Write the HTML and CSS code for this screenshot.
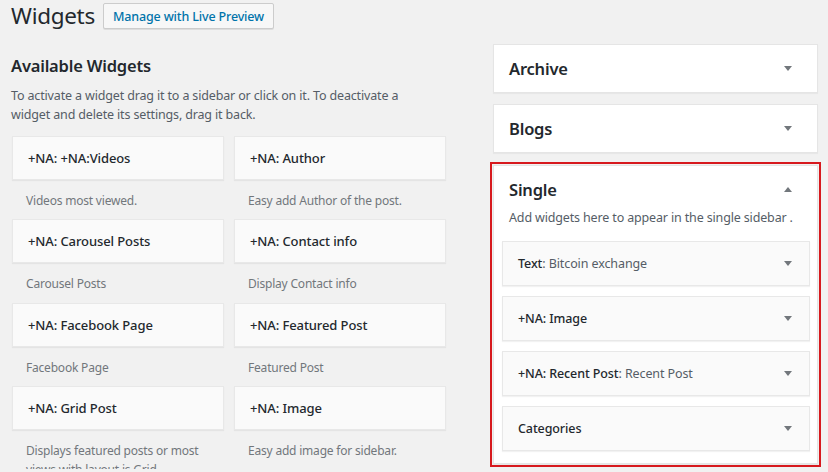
FILE: index.html
```html
<!DOCTYPE html>
<html>
<head>
<meta charset="utf-8">
<link rel="stylesheet" href="styles.css">
</head>
<body>
<div class="wrap">
  <div class="header">
    <h1 class="page-title">Widgets</h1>
    <span class="btn">Manage with Live Preview</span>
  </div>
  <div class="columns">
    <div class="left">
      <h2 class="avail-title">Available Widgets</h2>
      <p class="avail-desc">To activate a widget drag it to a sidebar or click on it. To deactivate a widget and delete its settings, drag it back.</p>
      <div class="grid">
        <div class="widget"><div class="wtop">+NA: +NA:Videos</div><div class="wdesc">Videos most viewed.</div></div>
        <div class="widget"><div class="wtop">+NA: Author</div><div class="wdesc">Easy add Author of the post.</div></div>
        <div class="widget"><div class="wtop">+NA: Carousel Posts</div><div class="wdesc">Carousel Posts</div></div>
        <div class="widget"><div class="wtop">+NA: Contact info</div><div class="wdesc">Display Contact info</div></div>
        <div class="widget"><div class="wtop">+NA: Facebook Page</div><div class="wdesc">Facebook Page</div></div>
        <div class="widget"><div class="wtop">+NA: Featured Post</div><div class="wdesc">Featured Post</div></div>
        <div class="widget"><div class="wtop">+NA: Grid Post</div><div class="wdesc">Displays featured posts or most views with layout is Grid</div></div>
        <div class="widget"><div class="wtop">+NA: Image</div><div class="wdesc">Easy add image for sidebar.</div></div>
      </div>
    </div>
    <div class="right">
      <div class="sidebar">
        <div class="sb-head"><span class="sb-title">Archive</span><span class="arrow down"></span></div>
      </div>
      <div class="sidebar">
        <div class="sb-head"><span class="sb-title">Blogs</span><span class="arrow down"></span></div>
      </div>
      <div class="sidebar open highlight">
        <div class="sb-head"><span class="sb-title">Single</span><span class="arrow up"></span></div>
        <p class="sb-desc">Add widgets here to appear in the single sidebar .</p>
        <div class="sb-widgets">
          <div class="sbw"><span class="sbw-title">Text<span class="in-title">: Bitcoin exchange</span></span><span class="arrow down small"></span></div>
          <div class="sbw"><span class="sbw-title">+NA: Image</span><span class="arrow down small"></span></div>
          <div class="sbw"><span class="sbw-title">+NA: Recent Post<span class="in-title">: Recent Post</span></span><span class="arrow down small"></span></div>
          <div class="sbw"><span class="sbw-title">Categories</span><span class="arrow down small"></span></div>
        </div>
      </div>
    </div>
  </div>
</div>
</body>
</html>
```

FILE: styles.css
```css
html, body {
  margin: 0;
  padding: 0;
  background: #f1f1f1;
  font-family: "Noto Sans", "Open Sans", sans-serif;
  color: #23282d;
  font-size: 13px;
  overflow: hidden;
}
.wrap {
  padding: 0 0 0 11px;
  width: 828px;
  box-sizing: border-box;
}
.header {
  display: flex;
  align-items: center;
  height: 34px;
  gap: 8px;
}
.page-title {
  margin: 0;
  font-size: 22.5px;
  font-weight: 400;
  line-height: 34px;
  color: #23282d;
  letter-spacing: -0.3px;
  position: relative;
  top: -1px;
}
.btn {
  display: inline-flex;
  align-items: center;
  height: 24px;
  padding: 0 9px;
  border: 1px solid #ccc;
  background: #f7f7f7;
  color: #0073aa;
  font-size: 12.5px;
  font-weight: 500;
  border-radius: 2px;
  box-shadow: 0 1px 0 #ddd;
  letter-spacing: -0.15px;
  position: relative;
  top: -1px;
}
.columns {
  display: flex;
  margin-top: 10px;
}
.left {
  width: 435px;
}
.avail-title {
  margin: 12px 0 0 0;
  font-size: 16.5px;
  font-weight: 600;
  line-height: 20px;
  letter-spacing: -0.2px;
}
.avail-desc {
  margin: 10px 0 0 0;
  font-size: 12.5px;
  line-height: 19px;
  color: #555d66;
  letter-spacing: -0.15px;
  width: 420px;
}
.grid {
  display: grid;
  grid-template-columns: 212px 212px;
  column-gap: 10px;
  margin-top: 12px;
  margin-left: 1px;
}
.widget {
  height: 83.3px;
}
.wtop {
  height: 44px;
  box-sizing: border-box;
  background: #fafafa;
  border: 1px solid #e8e8e8;
  box-shadow: 0 1px 1px rgba(0,0,0,.05);
  padding: 0 15px;
  line-height: 43px;
  font-size: 13px;
  font-weight: 500;
  color: #23282d;
  letter-spacing: -0.1px;
}
.wdesc {
  padding: 11px 14px 0 14px;
  font-size: 12px;
  line-height: 19px;
  color: #72777c;
  letter-spacing: -0.2px;
}
.right {
  width: 325px;
  margin-left: 47px;
  display: flex;
  flex-direction: column;
  gap: 11px;
}
.sidebar {
  background: #fff;
  border: 1px solid #e5e5e5;
  box-shadow: 0 1px 1px rgba(0,0,0,.04);
  box-sizing: border-box;
}
.sb-head {
  height: 47px;
  display: flex;
  align-items: center;
  justify-content: space-between;
  padding: 0 25px 0 15px;
}
.sb-title {
  font-size: 16.5px;
  font-weight: 600;
  letter-spacing: -0.2px;
  color: #23282d;
}
.arrow {
  width: 0;
  height: 0;
  border-left: 4px solid transparent;
  border-right: 4px solid transparent;
}
.arrow.down {
  border-top: 5px solid #72777c;
}
.arrow.up {
  border-bottom: 5px solid #72777c;
}
.highlight {
  outline: 2px solid #d7191e;
  outline-offset: 1px;
  margin-top: 1px;
}
.open .sb-head {
  height: 46px;
  padding-top: 0;
}
.sb-desc {
  margin: -4px 0 0 15px;
  font-size: 12.5px;
  line-height: 19px;
  color: #555d66;
  letter-spacing: -0.15px;
}
.sb-widgets {
  display: flex;
  flex-direction: column;
  gap: 10px;
  padding: 14px 7px 12px 8px;
}
.sbw {
  height: 45px;
  box-sizing: border-box;
  background: #fafafa;
  border: 1px solid #e8e8e8;
  box-shadow: 0 1px 1px rgba(0,0,0,.05);
  display: flex;
  align-items: center;
  justify-content: space-between;
  padding: 0 17px 0 15px;
}
.sbw-title {
  font-size: 12.5px;
  font-weight: 500;
  color: #23282d;
  letter-spacing: -0.1px;
}
.in-title {
  font-weight: 400;
  color: #555d66;
}
```
